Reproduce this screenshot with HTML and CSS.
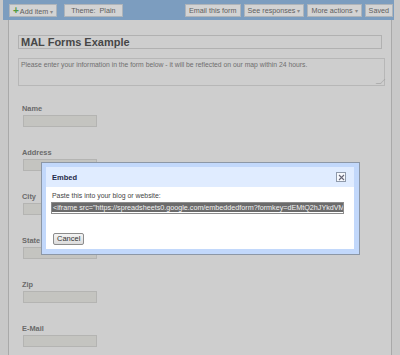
FILE: index.html
```html
<!DOCTYPE html>
<html lang="en">
<head>
  <meta charset="UTF-8">
  <title>MAL Forms Example - Edit form</title>
  <link rel="stylesheet" href="styles.css">
</head>
<body>
  <div class="toolbar">
    <div class="tb-left">
      <span class="tb-btn"><span class="plus">+</span>Add item <span class="caret">▾</span></span>
      <span class="tb-btn tb-theme">Theme:&nbsp; Plain</span>
    </div>
    <div class="tb-right">
      <span class="tb-btn">Email this form</span>
      <span class="tb-btn">See responses <span class="caret">▾</span></span>
      <span class="tb-btn">More actions <span class="caret">▾</span></span>
      <span class="tb-btn">Saved</span>
    </div>
  </div>

  <div class="page">
    <div class="form-title">MAL Forms Example</div>
    <div class="form-desc">Please enter your information in the form below - it will be reflected on our map within 24 hours.<span class="grip"></span></div>

    <div class="field"><div class="lbl">Name</div><div class="box"></div></div>
    <div class="field"><div class="lbl">Address</div><div class="box"></div></div>
    <div class="field"><div class="lbl">City</div><div class="box"></div></div>
    <div class="field"><div class="lbl">State</div><div class="box"></div></div>
    <div class="field"><div class="lbl">Zip</div><div class="box"></div></div>
    <div class="field"><div class="lbl">E-Mail</div><div class="box"></div></div>
  </div>

  <!-- fereastra Embed peste formular -->
  <div class="modal">
    <div class="modal-inner">
      <div class="modal-head">
        <span>Embed</span>
        <span class="close">
          <svg width="7" height="7" viewBox="0 0 7 7"><path d="M1 1L6 6M6 1L1 6" stroke="#667" stroke-width="1.1"/></svg>
        </span>
      </div>
      <div class="modal-body">
        <div class="hint">Paste this into your blog or website:</div>
        <div class="code"><span class="sel">&lt;iframe src="https://spreadsheets0.google.com/embeddedform?formkey=dEMtQ2hJYkdVMnR2aXZUdk1RLWRhbVE6MQ" width="760" height="1023" frameborder="0"&gt;</span></div>
        <span class="cancel">Cancel</span>
      </div>
    </div>
  </div>
</body>
</html>
```

FILE: styles.css
```css
body {
  margin: 0;
  background: #c8c8c8;
  font-family: 'Liberation Sans', Arial, sans-serif;
  height: 355px;
  overflow: hidden;
  position: relative;
}
.toolbar {
  margin: 0 6px 0 3px;
  height: 20px;
  background: #7c9dbf;
  display: flex;
  justify-content: space-between;
  align-items: center;
  padding: 0 1px 0 6px;
}
.tb-left, .tb-right {
  display: flex;
  gap: 3px;
}
.tb-left { gap: 7px; }
.tb-btn {
  height: 11px;
  line-height: 11px;
  padding: 0 3px;
  background: #d3d3d3;
  border: 1px solid #aeb4ba;
  font-size: 7.2px;
  color: #5e5e5e;
  white-space: nowrap;
}
.tb-theme { padding: 0 6px; }
.plus {
  color: #4f9a3e;
  font-weight: bold;
  font-size: 10px;
  margin-right: 1px;
}
.caret {
  font-size: 6px;
  color: #8a8a8a;
}
.page {
  margin-left: 8px;
  width: 364px;
  height: 335px;
  background: #cecece;
  border-left: 1px solid #a9a9a9;
  border-right: 1px solid #a9a9a9;
  padding: 15px 9px 0 9px;
  box-sizing: content-box;
}
.form-title {
  width: 360px;
  height: 12px;
  line-height: 12px;
  border: 1px solid #b1b1b1;
  padding-left: 2px;
  font-size: 11px;
  font-weight: bold;
  color: #474747;
}
.form-desc {
  margin-top: 9px;
  width: 363px;
  border: 1px solid #b7b7b7;
  padding: 2px 0 0 2px;
  box-sizing: content-box;
  font-size: 6.8px;
  color: #6e6e6e;
  position: relative;
  height: 24px;
}
.grip {
  position: absolute;
  right: 1px;
  bottom: 1px;
  width: 4px;
  height: 4px;
  border-right: 1px solid #9a9a9a;
  border-bottom: 1px solid #9a9a9a;
  transform: skewX(-45deg);
  opacity: 0.6;
}
.field {
  margin-top: 22px;
  padding-left: 4px;
}
.form-desc + .field { margin-top: 19px; }
.lbl {
  height: 10px;
  line-height: 8px;
  font-size: 7.4px;
  font-weight: bold;
  color: #6a6a6a;
}
.box {
  margin-left: 1px;
  width: 72px;
  height: 10px;
  background: #c4c4c0;
  border: 1px solid #b4b4b2;
}
.modal {
  position: absolute;
  left: 41px;
  top: 162px;
  width: 308px;
  height: 82px;
  border: 5px solid #c2d8fb;
  border-left-width: 4px;
  border-top-width: 4px;
  outline: 1px solid #8c97a6;
  background: #fff;
  margin-left: 1px;
  margin-top: 1px;
}
.modal-inner { height: 100%; }
.modal-head {
  height: 20px;
  background: #e0ecff;
  display: flex;
  justify-content: space-between;
  align-items: center;
  padding: 0 8px 0 6px;
  font-size: 7.5px;
  font-weight: bold;
  color: #1f2a48;
}
.close {
  width: 8px;
  height: 8px;
  border: 1px solid #8f9aab;
  background: #f7f9fd;
  display: flex;
  align-items: center;
  justify-content: center;
}
.modal-body {
  padding: 4px 9px 0 5px;
  font-size: 6.9px;
  color: #444;
}
.hint {
  margin-left: 1px;
  line-height: 9px;
}
.code {
  margin-top: 2px;
  width: 291px;
  height: 10px;
  line-height: 10px;
  border: 1px solid #8b8b8b;
  background: #fff;
  overflow: hidden;
  white-space: nowrap;
  font-size: 7.2px;
}
.sel {
  background: #6b6b6b;
  color: #f2f2f2;
  padding-left: 1px;
}
.cancel {
  display: inline-block;
  margin: 19px 0 0 2px;
  height: 10px;
  line-height: 10px;
  padding: 0 3px;
  border: 1px solid #8c8c8c;
  border-radius: 2px;
  background: linear-gradient(#f4f4f4, #dcdcdc);
  font-size: 7.5px;
  color: #333;
}
```
